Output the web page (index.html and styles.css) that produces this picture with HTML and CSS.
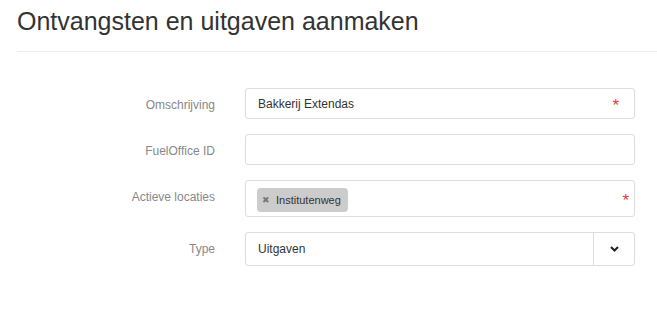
FILE: index.html
```html
<!DOCTYPE html>
<html lang="nl">
<head>
  <meta charset="UTF-8" />
  <title>Ontvangsten en uitgaven aanmaken</title>
  <link rel="stylesheet" href="styles.css">
</head>
<body>
  <div class="page">
    <div class="page-header">
      <h1>Ontvangsten en uitgaven aanmaken</h1>
    </div>

    <form class="form">
      <div class="form-row">
        <label class="form-label">Omschrijving</label>
        <div class="form-field">
          <input class="form-input" type="text" value="Bakkerij Extendas">
          <span class="required">*</span>
        </div>
      </div>

      <div class="form-row">
        <label class="form-label">FuelOffice ID</label>
        <div class="form-field">
          <input class="form-input" type="text" value="">
        </div>
      </div>

      <div class="form-row">
        <label class="form-label">Actieve locaties</label>
        <div class="form-field">
          <div class="multi">
            <span class="tag"><span class="tag-x">&#10006;</span>Institutenweg</span>
          </div>
          <span class="required">*</span>
        </div>
      </div>

      <div class="form-row">
        <label class="form-label">Type</label>
        <div class="form-field">
          <div class="select">
            <span class="select-value">Uitgaven</span>
            <span class="select-btn">
              <svg width="9" height="6" viewBox="0 0 9 6"><path d="M1 1 L4.5 4.5 L8 1" fill="none" stroke="#222" stroke-width="2"/></svg>
            </span>
          </div>
        </div>
      </div>
    </form>
  </div>
</body>
</html>
```

FILE: styles.css
```css
body {
  margin: 0;
  font-family: "Liberation Sans", Arial, sans-serif;
  background: #fff;
  color: #333;
}

.page {
  padding: 0 0 0 17px;
}

.page-header {
  border-bottom: 1px solid #eee;
  padding: 6px 0 15px;
}

.page-header h1 {
  margin: 0;
  font-size: 25px;
  font-weight: normal;
  line-height: 30px;
  color: #333;
}

.form {
  padding-top: 36px;
}

.form-row {
  display: flex;
  align-items: flex-start;
  margin-bottom: 15px;
}

.form-label {
  width: 198px;
  text-align: right;
  font-size: 12px;
  color: #888;
  padding-top: 10px;
  margin-right: 30px;
}

.form-field {
  position: relative;
  width: 390px;
}

.form-input {
  box-sizing: border-box;
  width: 100%;
  height: 31px;
  border: 1px solid #ddd;
  border-radius: 3px;
  padding: 0 12px;
  font-family: inherit;
  font-size: 12px;
  color: #333;
}

.required {
  position: absolute;
  right: 16px;
  top: 8px;
  color: #e53935;
  font-size: 17px;
}

.multi {
  box-sizing: border-box;
  height: 37px;
  border: 1px solid #ddd;
  border-radius: 3px;
  padding: 7px 11px;
}

.multi + .required {
  right: 6px;
  top: 11px;
}

.tag {
  display: inline-flex;
  align-items: center;
  height: 24px;
  padding: 0 7px 0 5px;
  background: #ccc;
  border-radius: 4px;
  font-size: 11px;
  color: #333;
}

.tag-x {
  font-size: 9px;
  color: #777;
  margin-right: 6px;
}

.select {
  box-sizing: border-box;
  display: flex;
  height: 34px;
  border: 1px solid #ddd;
  border-radius: 3px;
}

.select-value {
  flex: 1;
  padding: 0 12px;
  line-height: 32px;
  font-size: 12px;
  color: #333;
}

.select-btn {
  width: 40px;
  border-left: 1px solid #ddd;
  display: flex;
  align-items: center;
  justify-content: center;
}
```
